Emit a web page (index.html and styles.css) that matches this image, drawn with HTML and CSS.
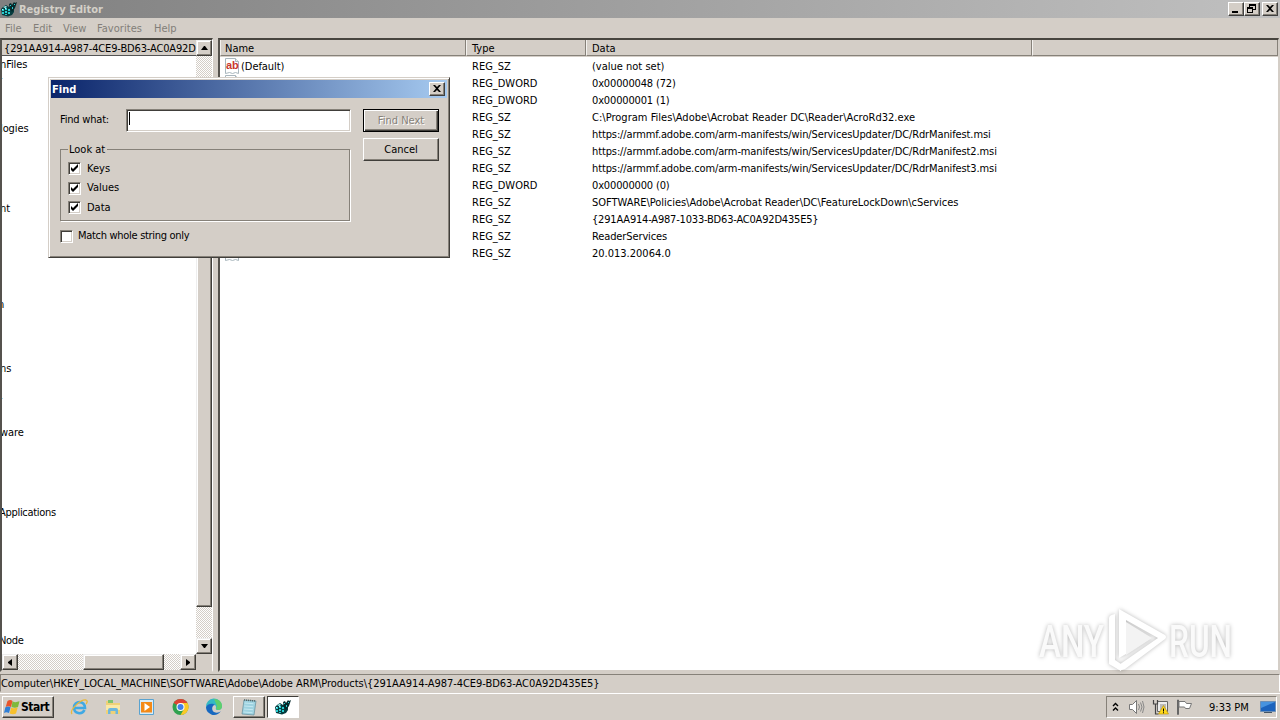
FILE: index.html
```
<!DOCTYPE html>
<html lang="en">
<head>
    <meta charset="UTF-8">
    <title>Registry Editor</title>
    <link rel="stylesheet" href="styles.css">
</head>
<body>
<svg class="defs" width="0" height="0">
    <symbol id="regedit" viewBox="0 0 16 16">
        <path d="M0 8l2-2 3-2 3 2 2-2 3 2v5l-2 3-4 1.500-6-1.500z" fill="#063c3f"/>
        <path d="M1 8h2v2H1zM4 7h2v2H4zM7 8h2v2H7zM1 11h2v2H1zM4 10h2v2H4zM7 11h2v2H7zM4 13h2v1H4z" fill="#27cdd0"/>
        <path d="M2 6l3-1 1 1-2 1zM4 7h1v1H4zM1 8h1v1H1z" fill="#a8ffff"/>
        <path d="M8 3l2-1 1 2 2-3 1 1 2-1-1 3-1 3-3 4-2-3z" fill="#04292b"/>
        <path d="M9 4h1v1H9zM11 6h1v2h-1zM13 3h1v1h-1z" fill="#27cdd0"/>
    </symbol>
    <symbol id="string" viewBox="0 0 16 16">
        <path d="M1.500.500h10l3 3v12l-3-1-3 1-3-1-4 1z" fill="#fff" stroke="#a9b6bd"/>
        <path d="M11.500.500v3h3" fill="#eee" stroke="#a9b6bd"/>
        <text x="2" y="10.500" class="ab">ab</text>
    </symbol>
    <symbol id="tick" viewBox="0 0 9 9">
        <path d="M1 3v3l2 2 5-5V0L3 5z" fill="#000"/>
    </symbol>
    <symbol id="close" viewBox="0 0 8 7">
        <path d="M0 0h2l2 2 2-2h2L5 3.500 8 7H6L4 5 2 7H0l3-3.500z" fill="#000"/>
    </symbol>
</svg>

<div class="titlebar">
    <svg class="i16"><use href="#regedit"/></svg>
    <span class="name">Registry Editor</span>
    <span class="winbtn"><svg width="8" height="8"><path d="M0 6h6v2H0z"/></svg></span>
    <span class="winbtn"><svg width="9" height="9"><path d="M2 0h7v6H6v3H0V3h2zM3 2v1h3v2h2V2zM1 5v3h4V5z" fill-rule="evenodd"/></svg></span>
    <span class="winbtn last"><svg width="8" height="7"><use href="#close"/></svg></span>
</div>
<div class="menu">
    <span class="m1">File</span><span class="m2">Edit</span><span class="m3">View</span><span class="m4">Favorites</span><span class="m5">Help</span>
</div>

<div class="panes">
    <div class="tree">
        <ul>
            <li class="tip">{291AA914-A987-4CE9-BD63-AC0A92D</li>
            <li>nFiles</li>
            <li class="cut">r</li>
            <li></li>
            <li></li>
            <li>logies</li>
            <li></li>
            <li></li>
            <li></li>
            <li></li>
            <li>nt</li>
            <li></li>
            <li></li>
            <li></li>
            <li></li>
            <li></li>
            <li class="cut">n</li>
            <li></li>
            <li></li>
            <li></li>
            <li>ns</li>
            <li></li>
            <li class="cut">r</li>
            <li></li>
            <li>ware</li>
            <li></li>
            <li></li>
            <li></li>
            <li></li>
            <li class="long">Applications</li>
            <li></li>
            <li></li>
            <li></li>
            <li></li>
            <li></li>
            <li></li>
            <li></li>
            <li class="long">Node</li>
        </ul>
        <div class="vbar">
            <span class="sbtn"><svg width="7" height="4"><path d="M3 0h1l3 4H0z"/></svg></span>
            <span class="thumb"></span>
            <span class="sbtn end"><svg width="7" height="4"><path d="M0 0h7L4 4H3z"/></svg></span>
        </div>
        <div class="hbar">
            <span class="sbtn"><svg width="4" height="7"><path d="M4 0v7L0 4V3z"/></svg></span>
            <span class="thumb"></span>
            <span class="sbtn end"><svg width="4" height="7"><path d="M0 0v7l4-3V3z"/></svg></span>
        </div>
        <div class="corner"></div>
    </div>
    <div class="list">
        <div class="row head"><span>Name</span><span>Type</span><span>Data</span><span></span></div>
        <div class="row"><span class="key"><svg class="i16"><use href="#string"/></svg>(Default)</span><span>REG_SZ</span><span>(value not set)</span></div>
        <div class="row"><span class="key"><svg class="i16"><use href="#string"/></svg></span><span>REG_DWORD</span><span class="num">0x00000048 (72)</span></div>
        <div class="row"><span></span><span>REG_DWORD</span><span class="num">0x00000001 (1)</span></div>
        <div class="row"><span></span><span>REG_SZ</span><span class="exe">C:\Program Files\Adobe\Acrobat Reader DC\Reader\AcroRd32.exe</span></div>
        <div class="row"><span></span><span>REG_SZ</span><span class="url">https://armmf.adobe.com/arm-manifests/win/ServicesUpdater/DC/RdrManifest.msi</span></div>
        <div class="row"><span></span><span>REG_SZ</span><span class="url">https://armmf.adobe.com/arm-manifests/win/ServicesUpdater/DC/RdrManifest2.msi</span></div>
        <div class="row"><span></span><span>REG_SZ</span><span class="url">https://armmf.adobe.com/arm-manifests/win/ServicesUpdater/DC/RdrManifest3.msi</span></div>
        <div class="row"><span></span><span>REG_DWORD</span><span class="num">0x00000000 (0)</span></div>
        <div class="row"><span></span><span>REG_SZ</span><span class="policy">SOFTWARE\Policies\Adobe\Acrobat Reader\DC\FeatureLockDown\cServices</span></div>
        <div class="row"><span></span><span>REG_SZ</span><span class="guid">{291AA914-A987-1033-BD63-AC0A92D435E5}</span></div>
        <div class="row"><span></span><span>REG_SZ</span><span class="url">ReaderServices</span></div>
        <div class="row"><span class="key"><svg class="i16"><use href="#string"/></svg></span><span>REG_SZ</span><span>20.013.20064.0</span></div>
    </div>
</div>

<div class="status"><span>Computer\HKEY_LOCAL_MACHINE\SOFTWARE\Adobe\Adobe ARM\Products\{291AA914-A987-4CE9-BD63-AC0A92D435E5}</span></div>

<div class="taskbar">
    <div class="start">
        <svg width="16" height="16" viewBox="0 0 16 16">
            <path d="M3.500 2c2-1.500 4-1 5 0L7 8c-2-1-3.500-1-5.300 0z" fill="#e8552c"/>
            <path d="M8.500 2.300c2 1.200 4 1 7 0L14 8c-2 1-4 1-6.500 0z" fill="#7fb93c"/>
            <path d="M1.400 8.300c2-1 3.500-1 5.200 0L5 14c-2-1-3.500-1-5 0z" fill="#2f7fd6"/>
            <path d="M7.200 8.500c2 1.200 4 1 6.500 0L12 14.500c-2 1-4 1-6.300 0z" fill="#f7c02c"/>
        </svg>
        <b>Start</b>
    </div>
    <div class="quick">
        <svg width="18" height="18" viewBox="0 0 18 18">
            <path d="M14.500 12c-2.500 5-10.500 4-10.500-2.500C4 2.500 15 2 15 10H5" fill="none" stroke="#3fa9e4" stroke-width="2.600"/>
            <path d="M2 16C-1 12 11 1 16 2c2 .6 1 3 0 4" fill="none" stroke="#e9b83a" stroke-width="1.300"/>
        </svg>
        <svg width="18" height="18" viewBox="0 0 18 18">
            <path d="M2 3h6l1 2h7v11H2z" fill="#efd178"/>
            <path d="M4 2h5v3H4z" fill="#7fc46d"/>
            <path d="M2 7h14v5H2z" fill="#fae9a6"/>
            <path d="M4 16v-4q0-2 2-2h6q2 0 2 2v4h-2.500v-3h-5v3z" fill="#6db7dd"/>
        </svg>
        <svg width="18" height="18" viewBox="0 0 18 18">
            <path d="M2.500 1.500h14v15h-14z" fill="#d8ecf8" stroke="#5aa3d0"/>
            <path d="M4 4h11v10.500H4z" fill="#f28a1c"/>
            <circle cx="9.500" cy="9" r="5" fill="#f58a14"/>
            <path d="M7.500 5L13 9l-5.500 4z" fill="#fff"/>
        </svg>
        <svg width="18" height="18" viewBox="0 0 18 18">
            <circle cx="9.500" cy="9" r="8" fill="#2fa14f"/>
            <path d="M9.500 9L2.600 5a8 8 0 0 1 13.900 0h-7z" fill="#dd4335"/>
            <path d="M9.500 9V5h7a8 8 0 0 1-7 12l3.500-6z" fill="#fbc926"/>
            <circle cx="9.500" cy="9" r="4" fill="#fff"/>
            <circle cx="9.500" cy="9" r="3" fill="#4080ea"/>
        </svg>
        <svg width="18" height="18" viewBox="0 0 18 18">
            <path d="M1 9a8 8 0 0 1 16-1c0 3-2 4-4 4-3 0-2-2-2-3 0-3-6-4-10 0z" fill="#35b9c4"/>
            <path d="M9 1c5 0 8 3 8 7 0 3-2 4-4 4l-2-1 1-3z" fill="#5fcf6c"/>
            <path d="M1 9c2-4 7-4 9-2-3 0-4 5-1 7 2 1 5 1 7-1-3 5-9 5-12 2-2-1-3-4-3-6z" fill="#1768c0"/>
        </svg>
    </div>
    <div class="task">
        <svg width="18" height="18" viewBox="0 0 18 18">
            <path d="M4 2l12 1-2 14-12-1z" fill="#9ed2e0" stroke="#638d9c" stroke-width=".7"/>
            <path d="M4.500 5l9 .7M4.200 8l9 .7M4 11l9 .7M3.500 14l9 .7" stroke="#c4e8f1"/>
            <path d="M4 2l12 1" stroke="#566" stroke-width="1.500" stroke-dasharray="1 1"/>
        </svg>
    </div>
    <div class="task on"><svg class="i16"><use href="#regedit"/></svg></div>
    <div class="tray">
        <svg class="chev" width="7" height="10"><path d="M1 4l2.500-2.500L6 4M1 8.500L3.500 6 6 8.500" fill="none" stroke="#000" stroke-width="1.400"/></svg>
        <svg class="vol" width="17" height="16" viewBox="0 0 17 16">
            <path d="M1.500 5.500h3l4-4v13l-4-4h-3z" fill="#fff" stroke="#777"/>
            <path d="M10.500 5q2 3 0 6M12.500 3.500q3 4.500 0 9M14.500 2q3 6 0 12" fill="none" stroke="#888"/>
        </svg>
        <svg class="net" width="17" height="16" viewBox="0 0 17 16">
            <path d="M5.500 2.500h10v10h-10z" fill="#eee" stroke="#666"/>
            <path d="M8 5h6v6H8z" fill="#bbb"/>
            <path d="M1.500 1v4h4V1M3.500 5v10h3" fill="none" stroke="#444" stroke-width="1.200"/>
            <path d="M11.500 6.500l5 8.500h-10z" fill="#ffd91c" stroke="#b88d00" stroke-width=".6"/>
            <path d="M11 9.500h1v3h-1zM11 13.200h1v1h-1z"/>
        </svg>
        <svg class="flag" width="17" height="16" viewBox="0 0 17 16">
            <path d="M1.500 1v14.500h1V1z" fill="#fff" stroke="#666"/>
            <path d="M3 2.500h6l1.500 2h5l-2 5h-4l-1-1.500H3z" fill="#fff" stroke="#777"/>
        </svg>
        <span class="time">9:33 PM</span>
        <svg class="desk" width="16" height="14" viewBox="0 0 16 14">
            <path d="M.5 1.500h15v10H.5z" fill="#1c63bd" stroke="#6d8fb5"/>
            <path d="M1 2h14L1 8z" fill="#4793df"/>
            <path d="M4 12h8v1H4z" fill="#456"/>
        </svg>
    </div>
</div>

<div class="dialog">
    <div class="caption"><b>Find</b><span class="winbtn"><svg width="8" height="7"><use href="#close"/></svg></span></div>
    <div class="form">
        <div class="left">
            <div class="what"><span>Find what:</span><div class="input"><i></i></div></div>
            <fieldset>
                <legend>Look at</legend>
                <div class="check"><span class="box"><svg width="9" height="9"><use href="#tick"/></svg></span>Keys</div>
                <div class="check"><span class="box"><svg width="9" height="9"><use href="#tick"/></svg></span>Values</div>
                <div class="check"><span class="box"><svg width="9" height="9"><use href="#tick"/></svg></span>Data</div>
            </fieldset>
            <div class="check whole"><span class="box"></span>Match whole string only</div>
        </div>
        <div class="right">
            <div class="button default"><span>Find Next</span></div>
            <div class="button"><span>Cancel</span></div>
        </div>
    </div>
</div>

<svg class="mark" width="210" height="74" viewBox="0 0 210 74">
    <text x="6" y="53" textLength="65" lengthAdjust="spacingAndGlyphs">ANY</text>
    <path d="M76 60V14q0-3 6-4v46l6 4v7z"/>
    <path d="M86 5l46 26q2 2 0 4L92 65q-6 3-9-2l42-29-32-18v34l-7 4z" fill-rule="evenodd"/>
    <path class="shade" d="M93 18v33l26-17z"/>
    <text x="136" y="53" textLength="63" lengthAdjust="spacingAndGlyphs">RUN</text>
</svg>
</body>
</html>
```
FILE: styles.css
```
*{
    margin: 0;
    padding: 0;
    box-sizing: border-box;
}
body{
    width: 1280px;
    height: 720px;
    overflow: hidden;
    position: relative;
    display: flex;
    flex-direction: column;
    background: #d4cec7;
    color: #000;
    font: 11px/16px "DejaVu Sans Condensed", "DejaVu Sans", sans-serif;
    font-stretch: condensed;
    white-space: nowrap;
}
ul{
    list-style: none;
}
.defs{
    position: absolute;
}
.i16{
    width: 16px;
    height: 16px;
    flex: none;
}
.ab{
    font: bold 11px "Liberation Sans", sans-serif;
    fill: #c8372d;
}
/*title bar*/
.titlebar{
    height: 18px;
    flex: none;
    display: flex;
    align-items: center;
    padding: 0 2px 0 1px;
    background: linear-gradient(to right, #808080, #c0c0c0);
    color: #d4d0c8;
    font-weight: bold;
}
.titlebar .name{
    flex: 1;
    padding: 1px 0 0 2px;
}
.winbtn{
    width: 16px;
    height: 14px;
    display: flex;
    align-items: center;
    justify-content: center;
    background: #d4cec7;
    border: 1px solid;
    border-color: #fff #404040 #404040 #fff;
    box-shadow: inset -1px -1px #868179;
}
.winbtn svg{
    margin: 0 1px 1px 0;
}
.winbtn.last{
    margin-left: 2px;
}
/*menu*/
.menu{
    height: 20px;
    flex: none;
    line-height: 20px;
    display: flex;
    padding: 1px 0 0 5px;
    color: #827e79;
}
.m1{ width: 28px; }
.m2{ width: 30px; }
.m3{ width: 34px; }
.m4{ width: 57px; letter-spacing: .05px; }
/*two panes*/
.panes{
    height: 634px;
    flex: none;
    display: flex;
    gap: 5px;
    padding-right: 1px;
}
.tree{
    width: 213px;
    display: grid;
    grid-template-columns: 194px 16px;
    grid-template-rows: 614px 16px;
    border: 2px solid;
    border-width: 2px 1px 2px 2px;
    border-color: #48453f #fff #d4cec7 #55524d;
    background: #fff;
}
.tree ul{
    overflow: hidden;
}
.tree li{
    height: 16px;
    line-height: 17px;
    text-indent: -2px;
    letter-spacing: -.1px;
}
.tree li.cut{
    text-indent: -4px;
}
.tree li.long{
    text-indent: -3px;
    letter-spacing: -.3px;
}
.tree li.tip{
    background: #d4cec7;
    text-indent: 2px;
    letter-spacing: -.15px;
    border-bottom: 1px solid #555;
}
.vbar,.hbar{
    display: flex;
    background: repeating-conic-gradient(#fff 0 25%, #d4cec7 0 50%) 0 0/2px 2px;
}
.vbar{
    flex-direction: column;
}
.sbtn,.thumb{
    background: #d4cec7;
    border: 1px solid;
    border-color: #eee #403e3a #403e3a #eee;
    box-shadow: inset -1px -1px #868179, inset 1px 1px #fff;
}
.sbtn{
    width: 16px;
    height: 16px;
    flex: none;
    display: flex;
    align-items: center;
    justify-content: center;
}
.vbar .thumb{
    height: 367px;
    margin-top: 184px;
}
.hbar .thumb{
    width: 81px;
    margin-left: 65px;
}
.vbar .end{
    margin-top: auto;
}
.hbar .end{
    margin-left: auto;
}
.corner{
    background: #d4cec7;
}
.list{
    flex: 1;
    border: 2px solid;
    border-width: 2px 1px 2px 2px;
    border-color: #48453f #d4cec7 #d4cec7 #55524d;
    background: #fff;
}
.row{
    height: 17px;
    line-height: 17px;
    display: grid;
    grid-template-columns: 246px 120px 446px 1fr;
}
.row span{
    padding-left: 6px;
}
.row .key{
    display: flex;
    padding-left: 4px;
    gap: 1px;
    letter-spacing: -.05px;
}
/*column text widths*/
.row .url{ letter-spacing: -.115px; }
.row .guid{ letter-spacing: -.19px; }
.row .policy{ letter-spacing: -.03px; }
.row .exe{ letter-spacing: .02px; }
.row .num{ letter-spacing: -.15px; }
.head{
    height: 17px;
    line-height: 18px;
    margin-bottom: 1px;
    background: #d4cec7;
}
.head span{
    height: 16px;
    padding-left: 5px;
    border-right: 1px solid #868179;
    border-left: 1px solid #f4f2ef;
    border-bottom: 1px solid #868179;
}
.head span:first-child{
    padding-left: 4px;
}
/*status line*/
.status{
    height: 21px;
    flex: none;
    padding-top: 2px;
}
.status span{
    display: block;
    height: 18px;
    line-height: 18px;
    letter-spacing: -.045px;
    border: 1px solid;
    border-color: #868179 #fff #d4cec7 #868179;
}
/*taskbar*/
.taskbar{
    height: 27px;
    flex: none;
    display: flex;
    align-items: center;
    border-top: 1px solid #fff;
    padding: 0 3px 0 2px;
}
.start{
    width: 52px;
    height: 22px;
    display: flex;
    align-items: center;
    gap: 1px;
    padding-left: 1px;
    border: 1px solid;
    border-color: #fff #403e3a #403e3a #fff;
    box-shadow: inset -1px -1px #868179;
}
.start b{
    font-size: 12px;
    letter-spacing: -.5px;
}
.quick{
    display: flex;
    gap: 15.700px;
    margin-left: 16px;
    width: 163px;
}
.quick svg{
    flex: none;
}
.task{
    width: 32px;
    height: 22px;
    display: flex;
    align-items: center;
    justify-content: center;
    border: 1px solid;
    border-color: #fff #403e3a #403e3a #fff;
    box-shadow: inset -1px -1px #868179;
}
.task.on{
    margin-left: 2px;
    background: #fff;
    border-color: #403e3a #fff #fff #403e3a;
    box-shadow: none;
}
.tray{
    width: 171px;
    height: 22px;
    margin-left: auto;
    display: flex;
    align-items: center;
    padding-left: 5px;
    border: 1px solid;
    border-color: #868179 #fff #fff #868179;
}
.vol{ margin-left: 9px; }
.net{ margin-left: 7px; }
.flag{ margin-left: 7px; }
.time{
    width: 43px;
    margin-left: 16px;
    padding-top: 1px;
}
.desk{ margin-left: 8px; }
/*find dialog*/
.dialog{
    position: absolute;
    left: 48px;
    top: 77px;
    width: 402px;
    height: 181px;
    padding: 1px;
    background: #d4cec7;
    border: 1px solid;
    border-color: #d4cec7 #403e3a #403e3a #d4cec7;
    box-shadow: inset 1px 1px #fff, inset -1px -1px #868179;
}
.caption{
    height: 18px;
    margin: 1px;
    display: flex;
    align-items: center;
    justify-content: space-between;
    padding: 0 2px 0 1px;
    color: #fff;
    background: linear-gradient(to right, #0a246a, #a6caf0);
}
.caption b{
    padding-top: 1px;
}
.form{
    display: flex;
    justify-content: space-between;
    padding: 10px 9px 0 10px;
}
.left{
    width: 291px;
}
.what{
    display: flex;
    justify-content: space-between;
    line-height: 21px;
    letter-spacing: -.2px;
}
.input{
    width: 225px;
    height: 23px;
    padding: 2px 1px;
    background: #fff;
    border: 1px solid;
    border-color: #868179 #fff #fff #868179;
    box-shadow: inset 1px 1px #403e3a, inset -1px -1px #d4cec7;
}
.input i{
    display: block;
    width: 1px;
    height: 13px;
    margin: 0 1px;
    background: #000;
}
fieldset{
    width: 290px;
    height: 80px;
    margin-top: 9px;
    padding: 2px 0 0 7px;
    border: 1px solid #868179;
    box-shadow: 1px 1px #fff;
}
legend{
    padding: 1px 2px 0 1px;
    line-height: 15px;
}
.check{
    display: flex;
    align-items: center;
    gap: 6px;
    height: 19.500px;
    line-height: 18px;
}
.box{
    width: 13px;
    height: 13px;
    padding: 1px;
    display: flex;
    background: #fff;
    border: 1px solid;
    border-color: #868179 #fff #fff #868179;
    box-shadow: inset 1px 1px #403e3a, inset -1px -1px #d4cec7;
}
.whole{
    margin-top: 5px;
    gap: 5px;
    height: 20px;
    letter-spacing: -.3px;
}
.right{
    width: 76px;
    display: flex;
    flex-direction: column;
    gap: 6px;
}
.button{
    height: 23px;
    line-height: 21px;
    text-align: center;
    border: 1px solid;
    border-color: #fff #403e3a #403e3a #fff;
    box-shadow: inset -1px -1px #868179;
}
.button.default{
    color: #868179;
    text-shadow: 1px 1px #fff;
    border-color: #000;
    box-shadow: inset 1px 1px #fff, inset -1px -1px #403e3a, inset -2px -2px #868179;
}
/*watermark*/
.mark{
    position: absolute;
    left: 1033px;
    top: 604px;
    font: 500 44px Roboto, sans-serif;
    fill: #fff;
    filter: drop-shadow(0 0 2px rgba(0,0,0,0.280));
}
.mark text{
    fill: #fafafa;
}
.mark .shade{
    fill: #f3f3f3;
}
```
